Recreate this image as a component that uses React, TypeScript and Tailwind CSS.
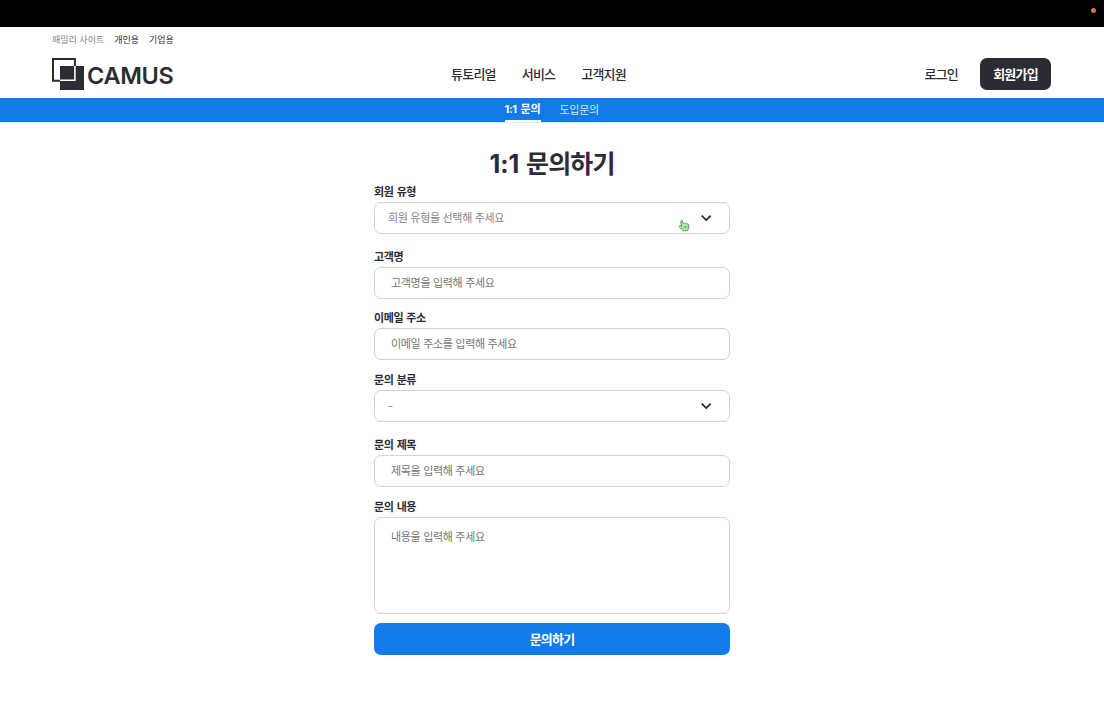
import React from "react";

function Logo() {
  return (
    <svg width="33" height="33" viewBox="0 0 33 33" aria-hidden="true">
      <path d="M8 8H32V32H8Z" fill="#2c2c35" />
      <path d="M8 22.7H1V1H22.9V8" fill="none" stroke="#2c2c35" strokeWidth="2" />
      <path d="M22.9 8V22.2H8" fill="none" stroke="#fff" strokeWidth="1.6" />
    </svg>
  );
}

function Chevron() {
  return (
    <svg width="12" height="8" viewBox="0 0 12 8" aria-hidden="true">
      <path d="M1.8 1.7L6.2 6L10.6 1.7" fill="none" stroke="#25252d" strokeWidth="1.7" />
    </svg>
  );
}

function HandCursor() {
  return (
    <svg className="absolute left-[303px] top-[16px]" width="12" height="13" viewBox="0 0 12 13" aria-hidden="true">
      <path
        d="M3 1.6C3.5 1.1 4.2 1.3 4.4 2L5.1 4.5C5.7 3.9 6.5 4 6.9 4.6C7.5 4.1 8.3 4.3 8.6 4.9C9.5 4.6 10.5 5 10.6 5.8L10.8 8.4C10.8 9.7 9.9 10.4 9.5 11.5L5.2 11.8C4.2 10.3 2.5 9.7 1.5 8.2C.9 7.2 1.5 6.4 2.4 6.7L3.6 7.2L2.7 2.6Z"
        fill="#b5edb4"
        stroke="#4f9a52"
        strokeWidth="1"
        strokeLinejoin="round"
      />
      <path d="M6 6.8V9.6M7.5 6.8V9.5M9 6.8V9.3" stroke="#4f9a52" strokeWidth="0.6" />
    </svg>
  );
}

const control = "relative flex h-8 w-full items-center rounded-[7px] border border-[#d3d3d6] bg-white text-[11px] leading-4 tracking-[-0.32px]";

function Field({ label, className, children }: { label: string; className: string; children: React.ReactNode }) {
  return (
    <div className={className}>
      <div className="mb-[2px] h-4 text-[11px] font-bold leading-4 tracking-[-0.4px] text-[#2c2c35] [word-spacing:1px]">{label}</div>
      {children}
    </div>
  );
}

function TextField({ placeholder }: { placeholder: string }) {
  return <div className={`${control} pl-4 text-[#757575]`}>{placeholder}</div>;
}

export default function App() {
  return (
    <div className="h-[718px] w-full overflow-hidden bg-white font-['Inter','Noto_Sans_CJK_KR',sans-serif] text-[#2c2c35]">
      <div className="flex h-[27px] justify-end bg-black pr-2 pt-[8px]">
        <span className="h-[5px] w-[5px] rounded-full bg-[#c4843c]" />
      </div>
      <header className="h-[71px] px-[52px]">
        <div className="flex h-[26px] items-center gap-[10px] text-[9px] leading-4 tracking-[0px]">
          <span className="text-[#85858c]">패밀리 사이트</span>
          <span>개인용</span>
          <span>기업용</span>
        </div>
        <div className="grid grid-cols-[1fr_auto_1fr] items-start pt-[5px]">
          <div className="flex items-center gap-[2px]">
            <Logo />
            <span className="pt-[3px] text-[23.5px] font-semibold leading-7 tracking-[-0.3px]">CAMUS</span>
          </div>
          <nav className="-ml-[27px] flex gap-[26px] pt-[6px] text-[13px] font-medium leading-5 tracking-[-0.8px]">
            <span>튜토리얼</span>
            <span>서비스</span>
            <span>고객지원</span>
          </nav>
          <div className="flex items-center justify-end gap-[22px] pr-px text-[13px] leading-5 tracking-[-0.8px]">
            <span className="font-medium">로그인</span>
            <button className="h-8 w-[71px] rounded-[7px] bg-[#2c2c35] font-bold text-white">회원가입</button>
          </div>
        </div>
      </header>
      <nav className="flex h-[25px] justify-center gap-[19px] border-b border-[#c9f3fc] bg-[#137aea] text-[11px] leading-[22px] text-white">
        <span className="h-6 w-9 whitespace-nowrap border-b-2 border-white font-bold tracking-[-0.3px] [word-spacing:1.5px]">1:1 문의</span>
        <span className="w-10 whitespace-nowrap pt-px tracking-[-0.3px] text-[#d4e7fc]">도입문의</span>
      </nav>
      <main className="ml-[374px] w-[356px] pt-[21px]">
        <h1 className="h-10 text-center text-[25px] font-bold leading-10 tracking-[-0.9px] [word-spacing:2px]">
          <span className="tracking-[-0.1px]">1:1</span> 문의하기
        </h1>
        <Field label="회원 유형" className="h-[65px]">
          <div className={`${control} justify-between pl-[13px] pr-[17px] text-[#85858c]`}>
            <span>회원 유형을 선택해 주세요</span>
            <Chevron />
            <HandCursor />
          </div>
        </Field>
        <Field label="고객명" className="h-[61px]">
          <TextField placeholder="고객명을 입력해 주세요" />
        </Field>
        <Field label="이메일 주소" className="h-[62px]">
          <TextField placeholder="이메일 주소를 입력해 주세요" />
        </Field>
        <Field label="문의 분류" className="h-[65px]">
          <div className={`${control} justify-between pl-[13px] pr-[17px] text-[#85858c]`}>
            <span>-</span>
            <Chevron />
          </div>
        </Field>
        <Field label="문의 제목" className="h-[62px]">
          <TextField placeholder="제목을 입력해 주세요" />
        </Field>
        <Field label="문의 내용" className="h-[124px]">
          <div className="h-[97px] rounded-[7px] border border-[#d3d3d6] pl-4 pt-[11px] text-[11px] leading-4 tracking-[-0.32px] text-[#757575]">
            내용을 입력해 주세요
          </div>
        </Field>
        <button className="h-8 w-full rounded-[7px] bg-[#137aea] text-[13px] font-bold leading-5 tracking-[-0.8px] text-white">문의하기</button>
      </main>
    </div>
  );
}
